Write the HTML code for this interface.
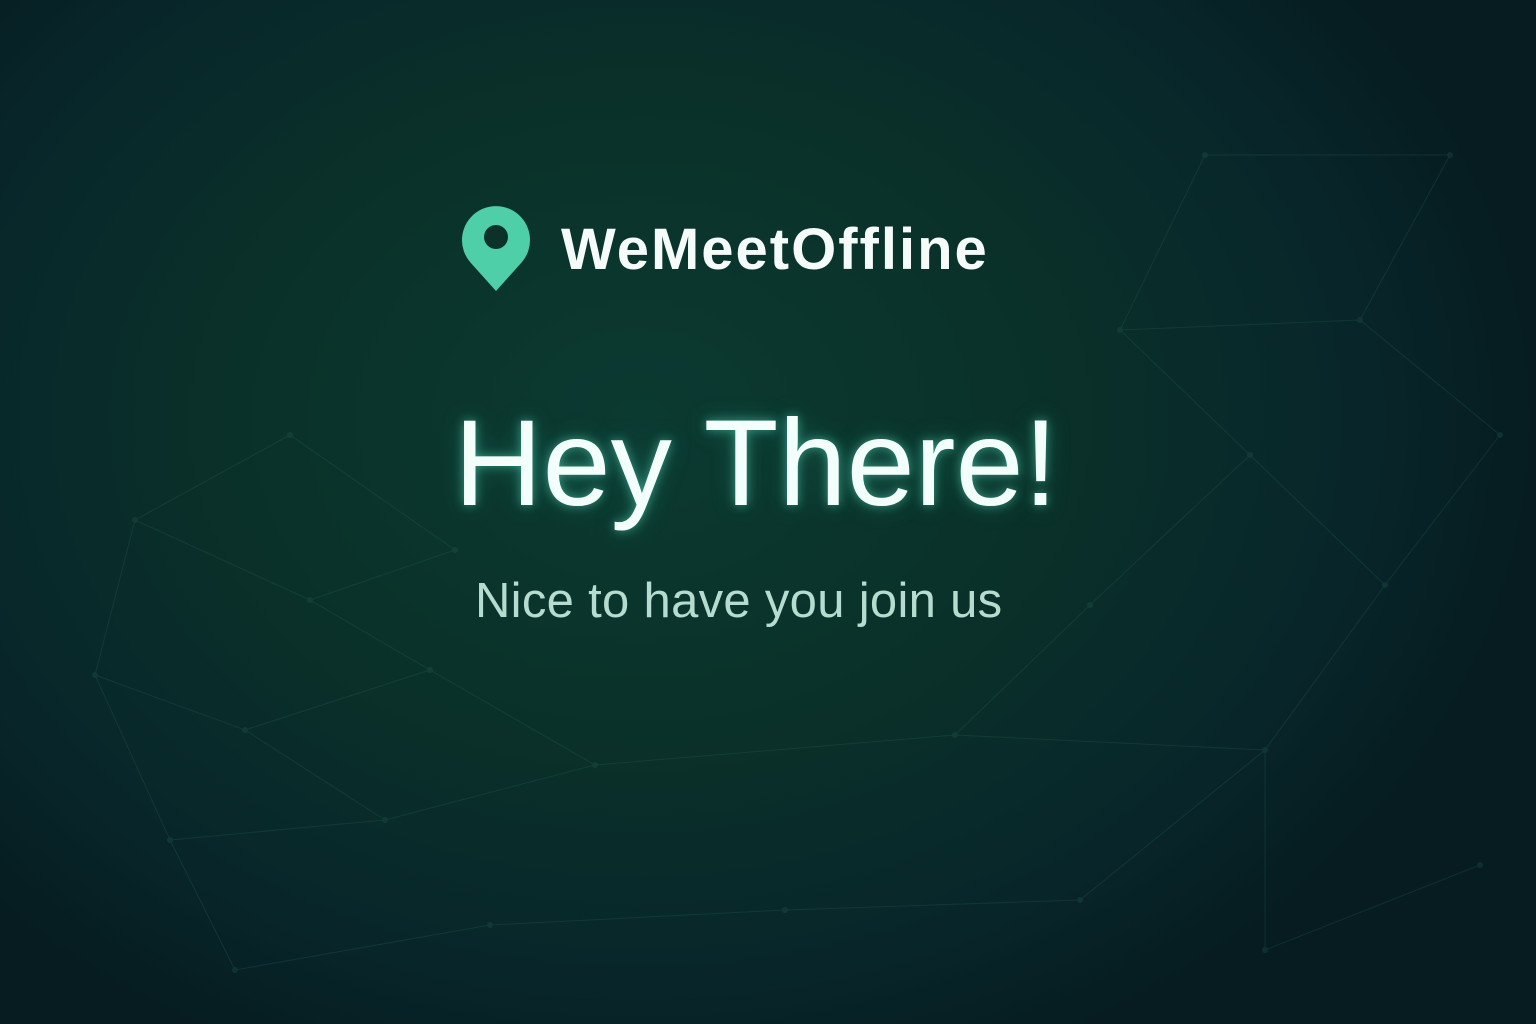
<!DOCTYPE html>
<html><head><meta charset="utf-8"><style>
html,body{margin:0;padding:0}
body{width:1536px;height:1024px;overflow:hidden;position:relative;font-family:"Liberation Sans",sans-serif;
background:radial-gradient(ellipse 900px 700px at 640px 420px,#0b3a31 0%,#0a3129 45%,#08262a 80%,#061c20 100%);}
.t{position:absolute;white-space:nowrap;line-height:1}
#logo{left:561px;top:221px;font-size:58px;font-weight:bold;color:#f4fbf8;letter-spacing:2px}
#hey{left:454px;top:402px;font-size:122.5px;color:#f2fffb;text-shadow:0 0 10px rgba(90,220,190,.55),0 0 24px rgba(60,200,170,.3)}
#sub{left:475px;top:577px;font-size:49px;color:#b6dccf;letter-spacing:0.3px}
svg{position:absolute;left:0;top:0}
</style></head><body>
<svg width="1536" height="1024" stroke="#2a6a58" stroke-width="1" fill="#2a6a58" opacity="0.25">
<g fill="none">
<polyline points="135,520 290,435 455,550 310,600 135,520 95,675 245,730 430,670 310,600"/>
<polyline points="95,675 170,840 385,820 245,730"/>
<polyline points="385,820 595,765 430,670"/>
<polyline points="595,765 955,735 1265,750 1385,585 1500,435 1360,320 1120,330 1250,455 1090,605 955,735"/>
<polyline points="1250,455 1385,585"/>
<polyline points="1120,330 1205,155 1450,155 1360,320"/>
<polyline points="1265,750 1080,900 785,910 490,925 235,970"/>
<polyline points="1265,750 1265,950 1480,865"/>
<polyline points="170,840 235,970"/>
</g>
<g stroke="none">
<circle cx="135" cy="520" r="3"/><circle cx="290" cy="435" r="3"/><circle cx="455" cy="550" r="3"/><circle cx="310" cy="600" r="3"/><circle cx="95" cy="675" r="3"/><circle cx="245" cy="730" r="3"/><circle cx="430" cy="670" r="3"/><circle cx="170" cy="840" r="3"/><circle cx="385" cy="820" r="3"/><circle cx="595" cy="765" r="3"/><circle cx="955" cy="735" r="3"/><circle cx="1265" cy="750" r="3"/><circle cx="1385" cy="585" r="3"/><circle cx="1500" cy="435" r="3"/><circle cx="1360" cy="320" r="3"/><circle cx="1120" cy="330" r="3"/><circle cx="1250" cy="455" r="3"/><circle cx="1090" cy="605" r="3"/><circle cx="1205" cy="155" r="3"/><circle cx="1450" cy="155" r="3"/><circle cx="1080" cy="900" r="3"/><circle cx="785" cy="910" r="3"/><circle cx="490" cy="925" r="3"/><circle cx="235" cy="970" r="3"/><circle cx="1265" cy="950" r="3"/><circle cx="1480" cy="865" r="3"/>
</g>
</svg>
<svg width="1536" height="1024">
<path d="M496 291 L470 262 A34 34 0 1 1 522 262 Z" fill="#4fcfa8"/>
<circle cx="496" cy="237" r="12" fill="#0b3129"/>
</svg>
<div class="t" id="logo">WeMeetOffline</div>
<div class="t" id="hey">Hey There!</div>
<div class="t" id="sub">Nice to have you join us</div>
</body></html>
